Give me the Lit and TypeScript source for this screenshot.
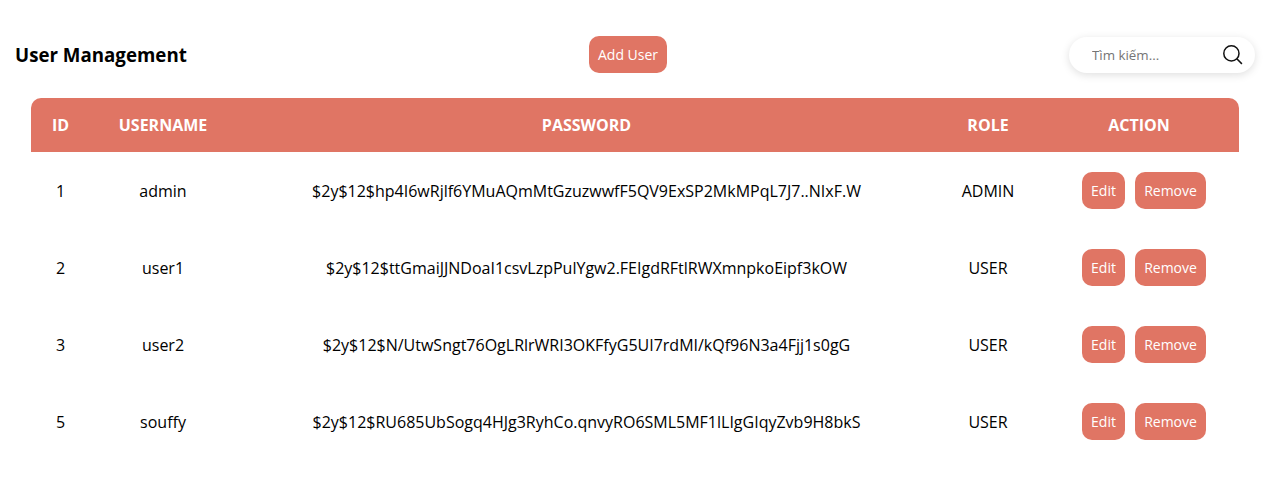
import { LitElement, html, css } from "lit";
import { customElement, state } from "lit/decorators.js";

interface User {
  id: number;
  name: string;
  password: string;
  role: string;
}

@customElement("app-root")
export class AppRoot extends LitElement {
  @state() private users: User[] = [
    { id: 1, name: "admin", password: "$2y$12$hp4I6wRjlf6YMuAQmMtGzuzwwfF5QV9ExSP2MkMPqL7J7..NIxF.W", role: "ADMIN" },
    { id: 2, name: "user1", password: "$2y$12$ttGmaiJJNDoaI1csvLzpPulYgw2.FEIgdRFtlRWXmnpkoEipf3kOW", role: "USER" },
    { id: 3, name: "user2", password: "$2y$12$N/UtwSngt76OgLRlrWRI3OKFfyG5UI7rdMI/kQf96N3a4Fjj1s0gG", role: "USER" },
    { id: 5, name: "souffy", password: "$2y$12$RU685UbSogq4HJg3RyhCo.qnvyRO6SML5MF1lLIgGIqyZvb9H8bkS", role: "USER" },
  ];

  static styles = css`
    :host {
      display: block;
      box-sizing: border-box;
      height: 483px;
      overflow: hidden;
      background: #fff;
      color: #000;
      font: 16px/22px "Open Sans", sans-serif;
    }
    * {
      box-sizing: border-box;
    }
    .bar {
      display: flex;
      justify-content: space-between;
      align-items: center;
      height: 37px;
      margin: 36px 10px 25px 15px;
    }
    h3 {
      margin: 0;
      width: 172px;
      font-size: 18.72px;
      line-height: 26px;
      font-weight: 700;
      white-space: nowrap;
    }
    .btn {
      border: 0;
      border-radius: 10px;
      padding: 9px;
      height: 37px;
      background: #e07564;
      color: #fff;
      font: 14px/19px "Open Sans", sans-serif;
      white-space: nowrap;
    }
    .add {
      width: 78px;
    }
    .search {
      display: flex;
      align-items: center;
      width: 186px;
      height: 36px;
      padding: 0 12px 0 23px;
      border-radius: 18px;
      box-shadow: 0 2px 8px rgba(0, 0, 0, 0.13);
    }
    input {
      flex: 1;
      min-width: 0;
      border: 0;
      padding: 0;
      outline: none;
      background: none;
      font: 13.333px/18px "Open Sans", sans-serif;
    }
    input::placeholder {
      color: #757575;
    }
    svg {
      width: 20px;
      height: 20px;
      flex: none;
    }
    .table {
      width: 1208px;
      margin-left: 31px;
    }
    .row {
      display: grid;
      grid-template-columns: 59px 146px 701px 102px 200px;
      align-items: center;
      justify-items: center;
      height: 77px;
      white-space: nowrap;
    }
    .head {
      height: 54px;
      border-radius: 10px 10px 0 0;
      background: #e07564;
      color: #fff;
      font-weight: 700;
    }
    .actions {
      display: flex;
      gap: 10px;
      padding-left: 10px;
    }
    .edit {
      width: 43px;
    }
    .remove {
      width: 71px;
    }
  `;

  render() {
    return html`
      <div class="bar">
        <h3>User Management</h3>
        <button class="btn add">Add User</button>
        <div class="search">
          <input type="text" placeholder="Tìm kiếm..." />
          <svg viewBox="0 0 20 20" fill="none" stroke="#111" stroke-width="1.5">
            <circle cx="8.4" cy="8.4" r="7.6" />
            <path d="M13.8 13.8 18.9 18.9" />
          </svg>
        </div>
      </div>
      <div class="table">
        <div class="row head">
          <span>ID</span><span>USERNAME</span><span>PASSWORD</span><span>ROLE</span><span>ACTION</span>
        </div>
        ${this.users.map(
          (u) => html`<div class="row">
            <span>${u.id}</span>
            <span>${u.name}</span>
            <span>${u.password}</span>
            <span>${u.role}</span>
            <div class="actions">
              <button class="btn edit">Edit</button>
              <button class="btn remove">Remove</button>
            </div>
          </div>`
        )}
      </div>
    `;
  }
}
